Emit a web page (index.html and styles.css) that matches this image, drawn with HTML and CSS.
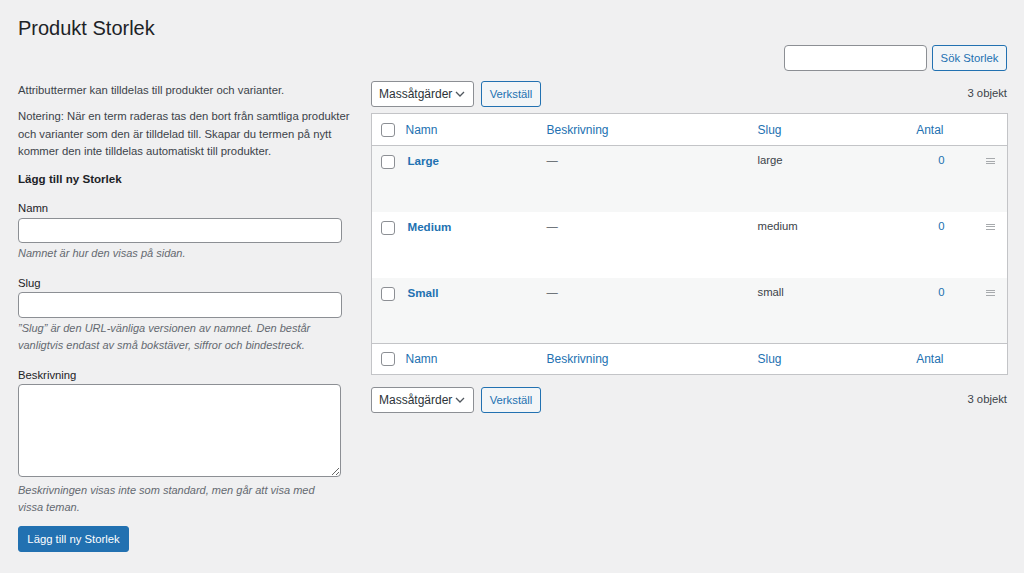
FILE: index.html
```html
<!DOCTYPE html>
<html lang="sv">
<head>
<meta charset="utf-8">
<title>Produkt Storlek</title>
<link rel="stylesheet" href="styles.css">
</head>
<body>
<div class="wrap">
  <h1 class="page-title">Produkt Storlek</h1>
  <div class="search-box">
    <input class="search-input" type="search">
    <button class="btn-secondary search-btn">Sök Storlek</button>
  </div>
  <div class="columns">
    <div class="col-left">
      <p class="intro">Attributtermer kan tilldelas till produkter och varianter.</p>
      <p class="intro">Notering: När en term raderas tas den bort från samtliga produkter och varianter som den är tilldelad till. Skapar du termen på nytt kommer den inte tilldelas automatiskt till produkter.</p>
      <h2 class="form-title">Lägg till ny Storlek</h2>
      <div class="form-field">
        <label class="field-label">Namn</label>
        <input class="text-input" type="text">
        <p class="desc">Namnet är hur den visas på sidan.</p>
      </div>
      <div class="form-field">
        <label class="field-label">Slug</label>
        <input class="text-input slug-input" type="text">
        <p class="desc">”Slug” är den URL-vänliga versionen av namnet. Den består vanligtvis endast av små bokstäver, siffror och bindestreck.</p>
      </div>
      <div class="form-field">
        <label class="field-label">Beskrivning</label>
        <textarea class="text-area"></textarea>
        <p class="desc desc-area">Beskrivningen visas inte som standard, men går att visa med vissa teman.</p>
      </div>
      <button class="btn-primary">Lägg till ny Storlek</button>
    </div>
    <div class="col-right">
      <div class="tablenav">
        <div class="bulk">
          <div class="select">Massåtgärder
            <svg class="chev" width="10" height="6" viewBox="0 0 10 6"><path d="M1 1 L5 5 L9 1" fill="none" stroke="#50575e" stroke-width="1.3"/></svg>
          </div>
          <button class="btn-secondary apply">Verkställ</button>
        </div>
        <div class="count">3 objekt</div>
      </div>
      <table class="terms">
        <colgroup>
          <col class="c-cb"><col class="c-name"><col class="c-desc"><col class="c-slug"><col class="c-posts"><col class="c-handle">
        </colgroup>
        <thead>
          <tr class="head-row">
            <td class="cb"><span class="checkbox"></span></td>
            <th class="th-name">Namn</th>
            <th>Beskrivning</th>
            <th>Slug</th>
            <th class="th-posts">Antal</th>
            <th></th>
          </tr>
        </thead>
        <tbody>
          <tr class="row striped">
            <td class="cb cb-row"><span class="checkbox"></span></td>
            <td class="name">Large</td>
            <td class="dash">—</td>
            <td class="slug">large</td>
            <td class="posts">0</td>
            <td class="handle"><span class="grip"></span></td>
          </tr>
          <tr class="row">
            <td class="cb cb-row"><span class="checkbox"></span></td>
            <td class="name">Medium</td>
            <td class="dash">—</td>
            <td class="slug">medium</td>
            <td class="posts">0</td>
            <td class="handle"><span class="grip"></span></td>
          </tr>
          <tr class="row striped">
            <td class="cb cb-row"><span class="checkbox"></span></td>
            <td class="name">Small</td>
            <td class="dash">—</td>
            <td class="slug">small</td>
            <td class="posts">0</td>
            <td class="handle"><span class="grip"></span></td>
          </tr>
        </tbody>
        <tfoot>
          <tr class="foot-row">
            <td class="cb"><span class="checkbox"></span></td>
            <th class="th-name">Namn</th>
            <th>Beskrivning</th>
            <th>Slug</th>
            <th class="th-posts">Antal</th>
            <th></th>
          </tr>
        </tfoot>
      </table>
      <div class="tablenav tablenav-bottom">
        <div class="bulk">
          <div class="select">Massåtgärder
            <svg class="chev" width="10" height="6" viewBox="0 0 10 6"><path d="M1 1 L5 5 L9 1" fill="none" stroke="#50575e" stroke-width="1.3"/></svg>
          </div>
          <button class="btn-secondary apply">Verkställ</button>
        </div>
        <div class="count">3 objekt</div>
      </div>
    </div>
  </div>
</div>
</body>
</html>
```

FILE: styles.css
```css
* { box-sizing: border-box; }
html, body { margin: 0; padding: 0; }
body {
  background: #f0f0f1;
  color: #3c434a;
  font-family: "Liberation Sans", Arial, sans-serif;
  font-size: 11.3px;
  width: 1024px;
  height: 573px;
  overflow: hidden;
}
.wrap { padding: 0 17px 0 18px; }
.page-title {
  margin: 14px 0 0 0;
  font-size: 20px;
  font-weight: 400;
  line-height: 28px;
  color: #1d2327;
}
.search-box {
  display: flex;
  justify-content: flex-end;
  gap: 5px;
  margin-top: 3px;
  height: 26px;
}
.search-input {
  width: 143px;
  height: 26px;
  border: 1px solid #8c8f94;
  border-radius: 4px;
  background: #fff;
}
button { font-family: inherit; font-size: 11.3px; cursor: pointer; white-space: nowrap; }
.btn-secondary {
  height: 26px;
  border: 1px solid #2271b1;
  border-radius: 3px;
  background: #f2f5f7;
  color: #2271b1;
  padding: 0;
}
.search-btn { width: 75px; }
.columns { display: flex; margin-top: 10px; }
.col-left { width: 342px; flex: none; padding-top: 1px; }
.col-right { width: 636px; margin-left: 11px; flex: none; }
.intro { margin: 0 0 8.5px 0; line-height: 17.5px; }
.form-title {
  margin: 9px 0 0 0;
  font-size: 11.6px;
  line-height: 18px;
  font-weight: 700;
  color: #1d2327;
}
.form-field { margin-top: 12px; }
.form-field + .form-field { margin-top: 13px; }
.field-label { display: block; line-height: 17px; color: #1d2327; }
.text-input {
  display: block;
  width: 324px;
  height: 25px;
  margin-top: 1.5px;
  border: 1px solid #8c8f94;
  border-radius: 4px;
  background: #fff;
}
.slug-input { height: 26px; margin-top: 0.5px; }
.text-area {
  display: block;
  width: 323px;
  height: 93px;
  margin-top: 0.5px;
  border: 1px solid #8c8f94;
  border-radius: 4px;
  background: #fff;
  resize: both;
}
.desc {
  width: 318px;
  margin: 1.5px 0 0 0;
  line-height: 17px;
  font-size: 11px;
  font-style: italic;
  color: #646970;
}
.desc-area { margin-top: 4.5px; }
.btn-primary {
  margin-top: 10.5px;
  width: 111px;
  height: 26px;
  border: 1px solid #2271b1;
  border-radius: 3px;
  background: #2271b1;
  color: #fff;
  padding: 0;
}
.tablenav {
  display: flex;
  justify-content: space-between;
  align-items: center;
  height: 26px;
}
.tablenav-bottom { margin-top: 12px; }
.bulk { display: flex; gap: 7px; }
.select {
  width: 103px;
  height: 26px;
  border: 1px solid #8c8f94;
  border-radius: 3px;
  background: #fff;
  color: #2c3338;
  display: flex;
  align-items: center;
  justify-content: space-between;
  padding: 0 8px 0 7px;
  font-size: 12px;
}
.chev { display: block; }
.apply { width: 60px; }
.count { color: #3c434a; padding-bottom: 3px; }
.terms {
  margin-top: 6px;
  width: 636px;
  border-collapse: collapse;
  table-layout: fixed;
  background: #fff;
  border: 1px solid #c3c4c7;
}
.c-cb { width: 28px; }
.c-name { width: 139px; }
.c-desc { width: 211px; }
.c-slug { width: 162px; }
.c-posts { width: 60px; }
.c-handle { width: 36px; }
.terms th {
  font-weight: 400;
  color: #2271b1;
  text-align: left;
  padding: 0 8px;
  font-size: 12px;
}
.th-name { padding-left: 6px !important; }
.th-posts { text-align: right !important; padding-right: 28px !important; padding-left: 0 !important; }
.head-row { height: 32px; border-bottom: 1px solid #c3c4c7; }
.foot-row { height: 31px; border-top: 1px solid #c3c4c7; }
.cb { padding: 0 0 0 9px; vertical-align: middle; }
.checkbox {
  display: block;
  width: 14px;
  height: 14px;
  border: 1px solid #8c8f94;
  border-radius: 3px;
  background: #fff;
}
.row { height: 66px; }
.row td { vertical-align: top; padding: 6px 8px 0 8px; line-height: 17px; }
.row td.cb-row { padding: 9px 0 0 9px; }
.striped { background: #f6f7f7; }
.name { font-weight: 700; color: #2271b1; font-size: 11.6px; }
.dash { color: #50575e; }
.slug { color: #3c434a; }
.posts { color: #2271b1; text-align: center; padding-left: 0 !important; padding-right: 0 !important; }
.handle { padding: 12px 0 0 0 !important; }
.grip {
  display: block;
  margin-left: 14px;
  width: 9px;
  height: 6px;
  border-top: 1px solid #a7aaad;
  border-bottom: 1px solid #a7aaad;
  position: relative;
}
.grip::after {
  content: "";
  position: absolute;
  left: 0;
  right: 0;
  top: 1.5px;
  border-top: 1px solid #a7aaad;
}
```
